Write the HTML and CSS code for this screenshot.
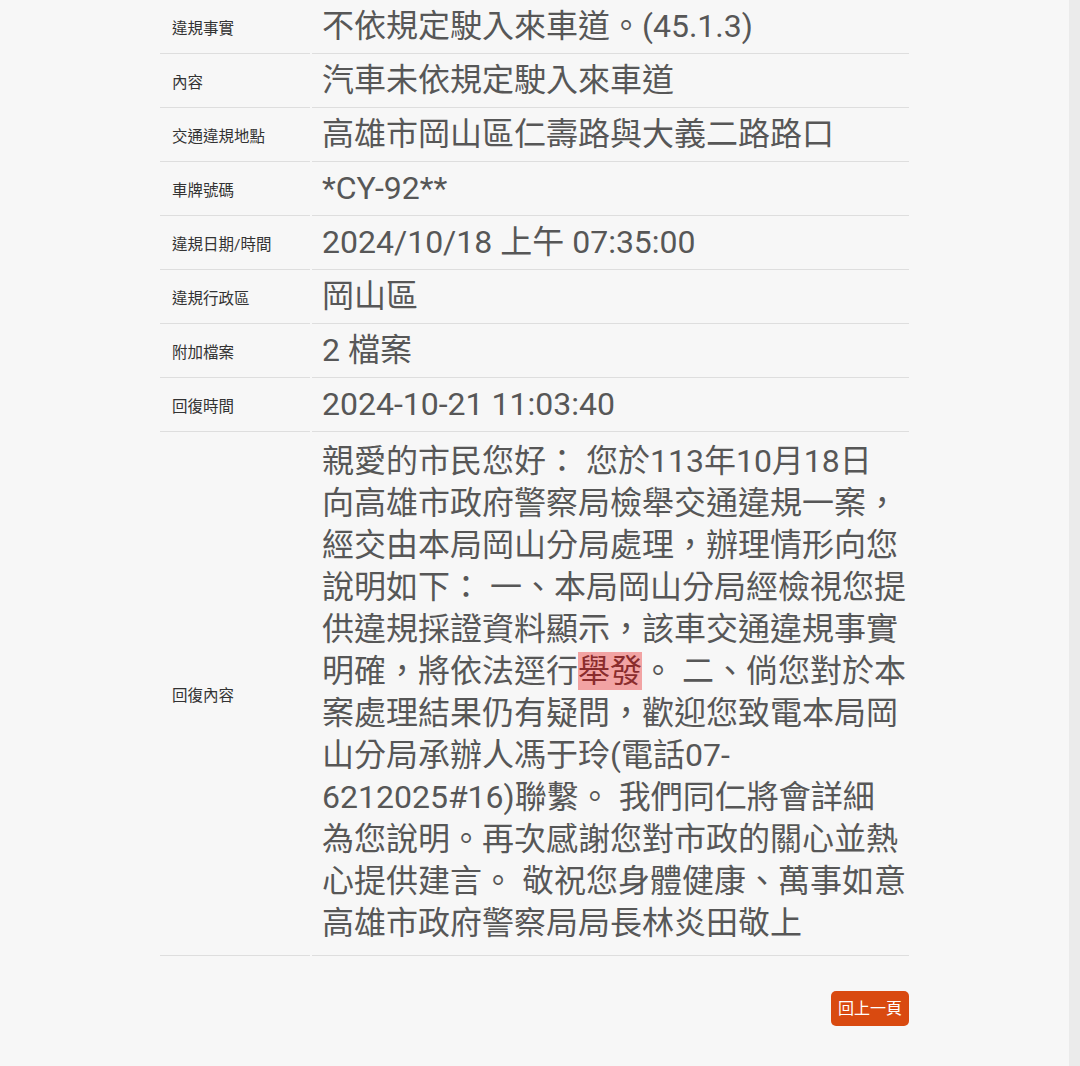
FILE: index.html
```html
<!DOCTYPE html>
<html lang="zh-Hant">
<head>
<meta charset="utf-8">
<link rel="stylesheet" href="styles.css">
</head>
<body>
<div class="page">
  <main class="main">
    <div class="table">
      <div class="row"><div class="label">違規事實</div><div class="value">不依規定駛入來車道。(45.1.3)</div></div>
      <div class="row"><div class="label">內容</div><div class="value">汽車未依規定駛入來車道</div></div>
      <div class="row"><div class="label">交通違規地點</div><div class="value">高雄市岡山區仁壽路與大義二路路口</div></div>
      <div class="row"><div class="label">車牌號碼</div><div class="value">*CY-92**</div></div>
      <div class="row"><div class="label">違規日期/時間</div><div class="value">2024/10/18 上午 07:35:00</div></div>
      <div class="row"><div class="label">違規行政區</div><div class="value">岡山區</div></div>
      <div class="row"><div class="label">附加檔案</div><div class="value">2 檔案</div></div>
      <div class="row"><div class="label">回復時間</div><div class="value">2024-10-21 11:03:40</div></div>
      <div class="row"><div class="label">回復內容</div><div class="value long">親愛的市民您好： 您於113年10月18日<br>向高雄市政府警察局檢舉交通違規一案，<br>經交由本局岡山分局處理，辦理情形向您<br>說明如下： 一、本局岡山分局經檢視您提<br>供違規採證資料顯示，該車交通違規事實<br>明確，將依法逕行<span class="hl">舉發</span>。 二、倘您對於本<br>案處理結果仍有疑問，歡迎您致電本局岡<br>山分局承辦人馮于玲(電話07-<br>6212025#16)聯繫。 我們同仁將會詳細<br>為您說明。再次感謝您對市政的關心並熱<br>心提供建言。 敬祝您身體健康、萬事如意<br>高雄市政府警察局局長林炎田敬上</div></div>
    </div>
    <div class="actions"><a class="btn">回上一頁</a></div>
  </main>
  <div class="edge"></div>
</div>
</body>
</html>
```

FILE: styles.css
```css
html, body {
  margin: 0;
  padding: 0;
  background: #f7f7f7;
}
body {
  font-family: Roboto, "Noto Sans CJK TC", sans-serif;
}
.page {
  display: flex;
  min-height: 1066px;
}
.main {
  flex: 1;
  display: flex;
  flex-direction: column;
  align-items: center;
}
.edge {
  width: 11px;
  background: #ebebeb;
}
.table {
  width: 749px;
}
.row {
  display: flex;
}
.label {
  width: 138px;
  padding-left: 12px;
  font-size: 15.5px;
  color: #333;
  display: flex;
  align-items: center;
  border-bottom: 1px solid #dedede;
}
.value {
  flex: 1;
  margin-left: 2px;
  padding: 5px 0 6px 10px;
  font-size: 32px;
  line-height: 42px;
  color: #575757;
  border-bottom: 1px solid #dedede;
}
.value.long {
  padding: 8px 0 11px 10px;
  white-space: nowrap;
}
.hl {
  background: #f2a3a3;
  color: #8a2c2c;
}
.actions {
  width: 749px;
  display: flex;
  justify-content: flex-end;
  margin-top: 35px;
}
.btn {
  background: #d94a10;
  color: #fff;
  font-size: 16px;
  line-height: 35px;
  height: 35px;
  padding: 0 7px;
  border-radius: 5px;
}
```
